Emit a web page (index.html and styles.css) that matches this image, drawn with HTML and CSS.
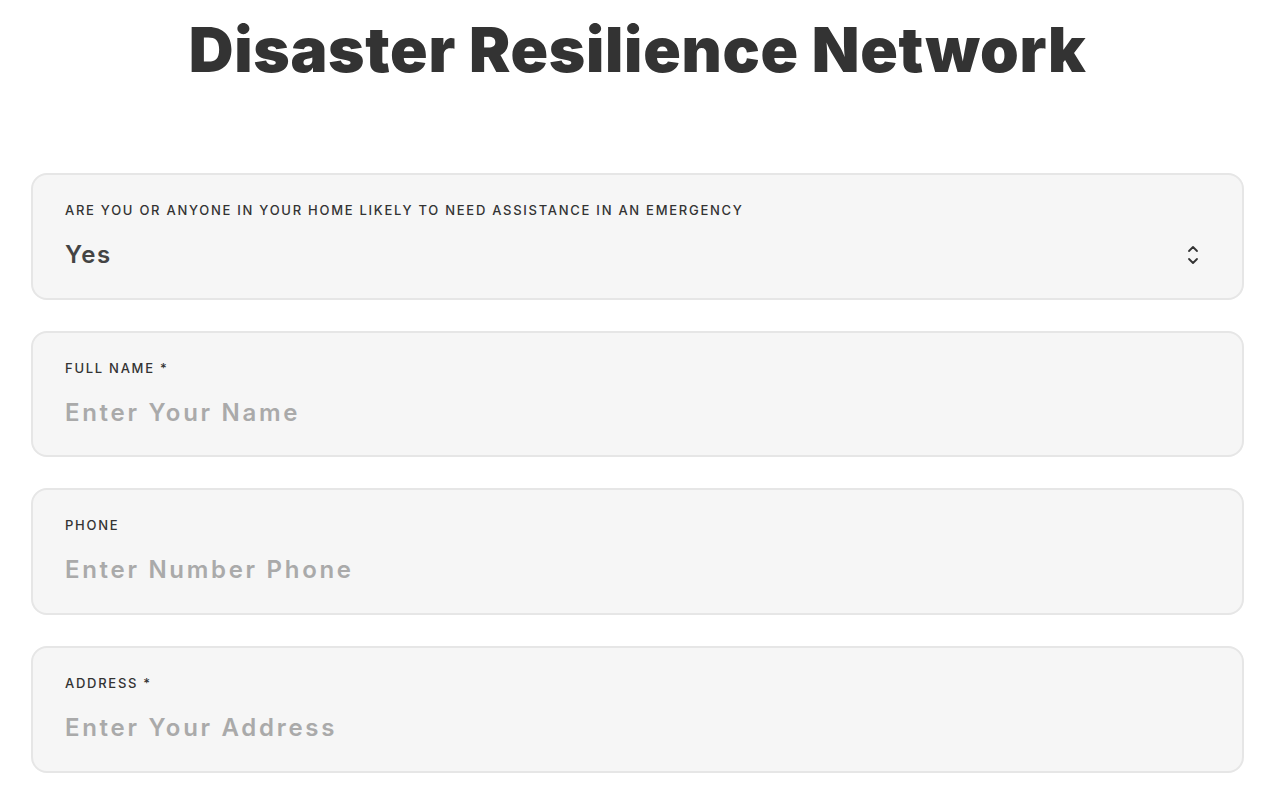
FILE: index.html
```html
<!DOCTYPE html>
<html lang="en">
<head>
<meta charset="utf-8">
<title>Disaster Resilience Network</title>
<link rel="stylesheet" href="styles.css">
</head>
<body>
<main class="page">
  <h1 class="title">Disaster Resilience Network</h1>
  <form class="form">
    <div class="field">
      <label class="label">ARE YOU OR ANYONE IN YOUR HOME LIKELY TO NEED ASSISTANCE IN AN EMERGENCY</label>
      <div class="select-row">
        <span class="value">Yes</span>
        <svg class="chevrons" width="12" height="22" viewBox="0 0 12 22" aria-hidden="true">
          <path d="M2 7 L6 3 L10 7" fill="none" stroke="#333" stroke-width="1.8" stroke-linecap="round" stroke-linejoin="round"/>
          <path d="M2 15 L6 19 L10 15" fill="none" stroke="#333" stroke-width="1.8" stroke-linecap="round" stroke-linejoin="round"/>
        </svg>
      </div>
    </div>
    <div class="field">
      <label class="label">FULL NAME *</label>
      <input class="input" type="text" placeholder="Enter Your Name">
    </div>
    <div class="field">
      <label class="label">PHONE</label>
      <input class="input" type="text" placeholder="Enter Number Phone">
    </div>
    <div class="field">
      <label class="label">ADDRESS *</label>
      <input class="input" type="text" placeholder="Enter Your Address">
    </div>
  </form>
</main>
</body>
</html>
```
FILE: styles.css
```css
* { box-sizing: border-box; }
html, body { margin: 0; padding: 0; background: #ffffff; }
body { font-family: Inter, sans-serif; color: #333333; }
.page {
  padding: 10px 39px 0 31px;
}
.title {
  margin: 0;
  font-family: Inter, sans-serif;
  font-weight: 900;
  font-size: 62px;
  line-height: 80px;
  text-align: center;
  color: #333333;
  letter-spacing: 0.7px;
}
.form {
  margin-top: 83px;
  display: flex;
  flex-direction: column;
  gap: 31px;
}
.field {
  background: #f6f6f6;
  border: 2px solid #e6e6e6;
  border-radius: 16px;
  padding: 27px 32px 27px 32px;
  display: flex;
  flex-direction: column;
  gap: 22px;
  height: 126.67px;
}
.label {
  display: block;
  font-family: Inter, sans-serif;
  font-size: 13px;
  font-weight: 500;
  line-height: 16px;
  height: 16px;
  letter-spacing: 1.73px;
  color: #333333;
}
.select-row {
  display: flex;
  align-items: center;
  justify-content: space-between;
  height: 30px;
  padding-right: 11px;
}
.value {
  font-size: 24px;
  font-weight: 600;
  line-height: 30px;
  letter-spacing: 1.5px;
  color: #444444;
}
.chevrons { display: block; }
.input {
  display: block;
  border: 0;
  outline: 0;
  background: transparent;
  padding: 0;
  margin: 0;
  height: 30px;
  font-family: Inter, sans-serif;
  font-size: 24px;
  font-weight: 600;
  line-height: 30px;
  letter-spacing: 2.7px;
  color: #444444;
  width: 100%;
}
.input::placeholder { color: #aaaaaa; opacity: 1; }
```
